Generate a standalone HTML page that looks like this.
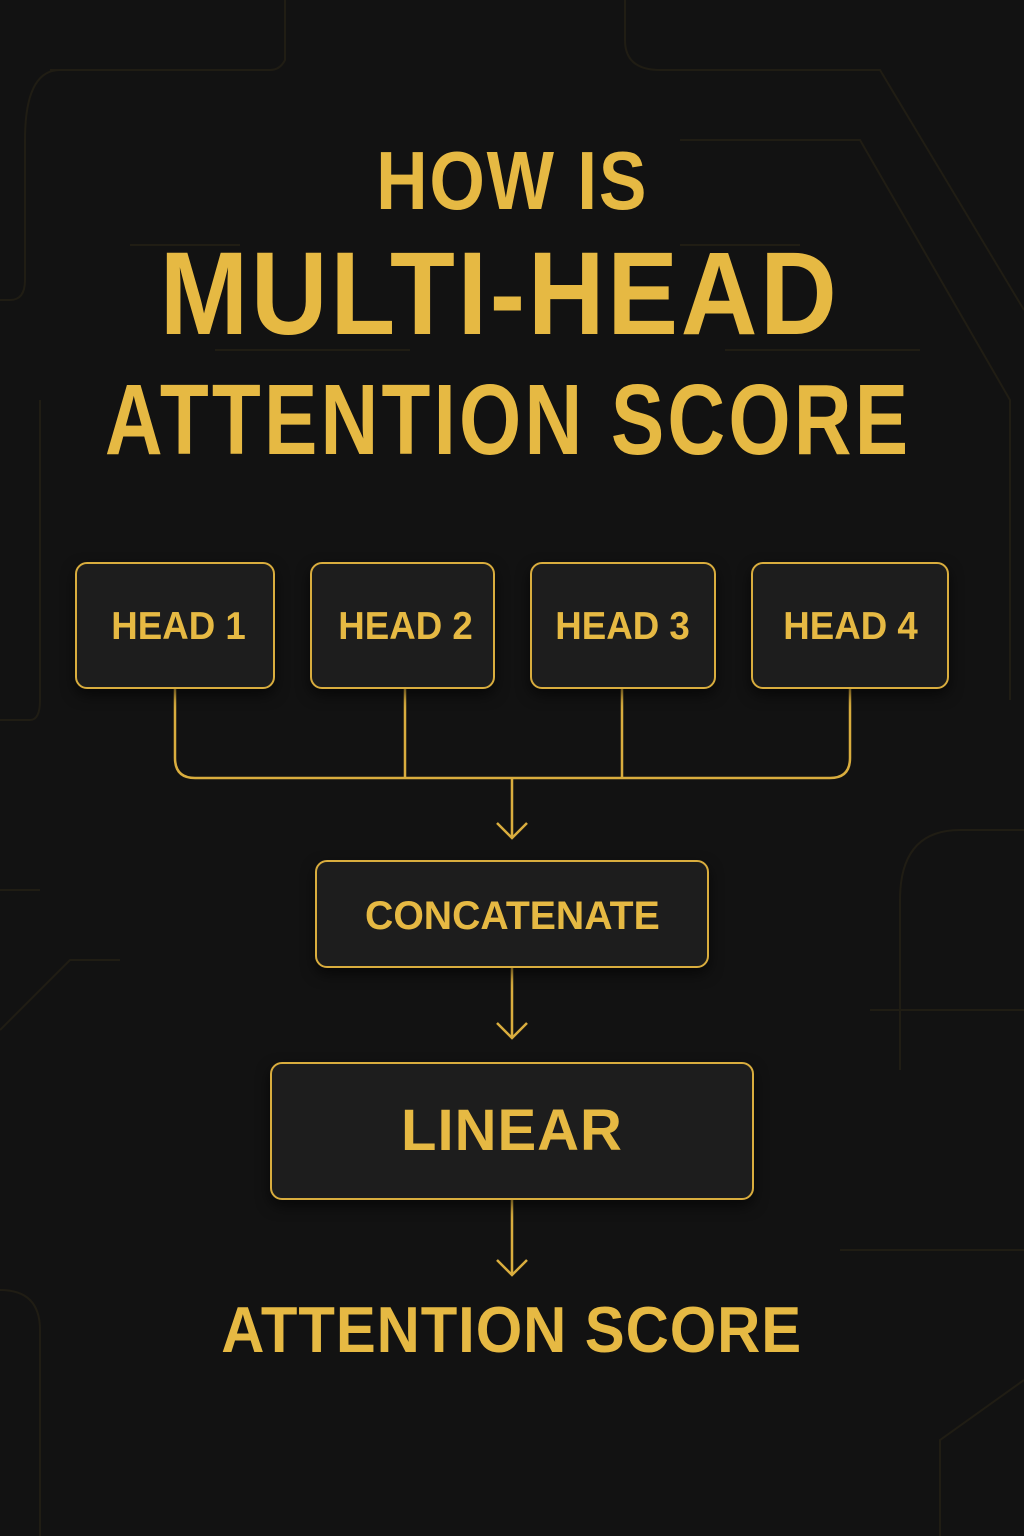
<!DOCTYPE html>
<html><head><meta charset="utf-8"><style>
html,body{margin:0;padding:0}
body{width:1024px;height:1536px;background:#121212;position:relative;overflow:hidden;font-family:"Liberation Sans",sans-serif;color:#e6b943;font-weight:bold}
.t{position:absolute;left:0;width:1024px;text-align:center;line-height:1;white-space:nowrap}
.t span{display:inline-block}
.box{position:absolute;box-sizing:border-box;border:2.5px solid #d9ad3e;border-radius:12px;background:#1d1d1d;box-shadow:0 6px 14px rgba(0,0,0,.6)}
svg{position:absolute;left:0;top:0}
</style></head><body>
<svg width="1024" height="1536">
<g stroke="#201d14" stroke-width="2" fill="none">
<path d="M50 70 H270 Q280 70 285 60 V0"/>
<path d="M0 300 H10 Q25 300 25 280 V140 Q25 70 60 70"/>
<path d="M625 0 V40 Q625 70 660 70 H880 L1024 310"/>
<path d="M680 140 H860 L1010 400 V700"/>
<path d="M0 720 H30 Q40 720 40 700 V400"/>
<path d="M130 245 H240 M680 245 H800 M215 350 H410 M725 350 H920 M0 890 H40 M0 1290 Q40 1290 40 1330 V1536 M940 1536 V1440 L1024 1380"/>
<path d="M1024 830 H960 Q900 830 900 900 V1070"/>
<path d="M840 1250 H1024 M870 1010 H1024 M0 1030 L70 960 H120"/>
</g>
<g stroke="#d9ad3e" stroke-width="2.5" fill="none">
<path d="M175 688 V758 Q175 778 195 778 H830 Q850 778 850 758 V688"/>
<path d="M405 688 V778 M622 688 V778"/>
<path d="M512 778 V838 M497 823 L512 838 L527 823"/>
<path d="M512 967 V1038 M497 1023 L512 1038 L527 1023"/>
<path d="M512 1200 V1275 M497 1260 L512 1275 L527 1260"/>
</g>
</svg>
<div class="t" style="top:139px;font-size:83px"><span style="transform:scaleX(.86);letter-spacing:2px">HOW IS</span></div>
<div class="t" style="top:235px;font-size:118px;left:-12px"><span style="transform:scaleX(.9);letter-spacing:3px">MULTI-HEAD</span></div>
<div class="t" style="top:370px;font-size:100px;left:-4px"><span style="transform:scaleX(.8);letter-spacing:4px">ATTENTION SCORE</span></div>

<div class="box" style="left:75px;top:562px;width:200px;height:127px"></div>
<div class="box" style="left:310px;top:562px;width:185px;height:127px"></div>
<div class="box" style="left:530px;top:562px;width:186px;height:127px"></div>
<div class="box" style="left:751px;top:562px;width:198px;height:127px"></div>
<div class="t" style="top:607px;font-size:39px;left:79px;width:200px"><span style="transform:scaleX(.94)">HEAD 1</span></div>
<div class="t" style="top:607px;font-size:39px;left:313px;width:185px"><span style="transform:scaleX(.94)">HEAD 2</span></div>
<div class="t" style="top:607px;font-size:39px;left:530px;width:186px"><span style="transform:scaleX(.94)">HEAD 3</span></div>
<div class="t" style="top:607px;font-size:39px;left:752px;width:198px"><span style="transform:scaleX(.94)">HEAD 4</span></div>

<div class="box" style="left:315px;top:860px;width:394px;height:108px"></div>
<div class="t" style="top:896px;font-size:40px"><span style="transform:scaleX(.98)">CONCATENATE</span></div>

<div class="box" style="left:270px;top:1062px;width:484px;height:138px"></div>
<div class="t" style="top:1102px;font-size:58px"><span style="letter-spacing:1px">LINEAR</span></div>

<div class="t" style="top:1297px;font-size:65px"><span style="transform:scaleX(.92);letter-spacing:1px">ATTENTION SCORE</span></div>
</body></html>
